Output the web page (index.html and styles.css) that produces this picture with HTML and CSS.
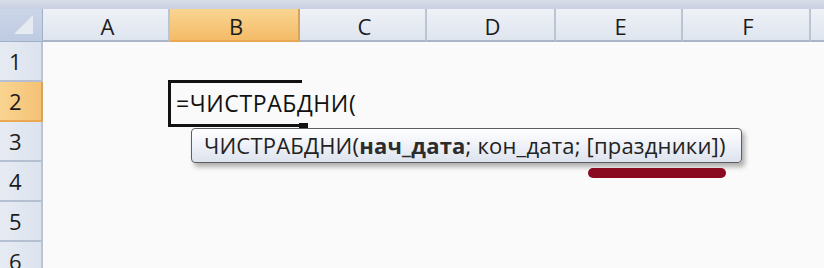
FILE: index.html
```html
<!DOCTYPE html>
<html lang="ru">
<head>
<meta charset="utf-8">
<link rel="stylesheet" href="styles.css">
</head>
<body>
<div class="sheet">
  <div class="topband"></div>
  <div class="grid">
    <div class="corner"><span class="tri"></span></div>
    <div class="ch">A</div>
    <div class="ch sel">B</div>
    <div class="ch">C</div>
    <div class="ch">D</div>
    <div class="ch">E</div>
    <div class="ch">F</div>
    <div class="ch last"></div>

    <div class="rh">1</div><div class="row"></div>
    <div class="rh sel">2</div><div class="row"></div>
    <div class="rh">3</div><div class="row"></div>
    <div class="rh">4</div><div class="row"></div>
    <div class="rh">5</div><div class="row"></div>
    <div class="rh">6</div><div class="row"></div>
  </div>

  <div class="editor"><span class="handle"></span></div>
  <div class="formula">=ЧИСТРАБДНИ(</div>
  <div class="tip">ЧИСТРАБДНИ(<b>нач_дата</b>; кон_дата; [праздники])</div>
  <div class="mark"></div>
</div>
</body>
</html>
```

FILE: styles.css
```css
html, body {
  margin: 0;
  padding: 0;
  background: #fafafa;
}
.sheet {
  position: relative;
  width: 824px;
  height: 268px;
  overflow: hidden;
  font-family: "Open Sans", "Noto Sans", sans-serif;
  color: #1c1c1c;
}
.topband {
  height: 9px;
  background: linear-gradient(#d9dde8, #c9d0e2);
}
.grid {
  display: grid;
  grid-template-columns: 43px 127px 130px 127px 129px 127px 128px 1fr;
  grid-template-rows: 33px repeat(6, 40px);
}
.corner {
  background: linear-gradient(#cbd5e8, #bfcbe2);
  border-right: 1px solid #9fb0c8;
  border-bottom: 1px solid #9fb0c8;
  position: relative;
}
.tri {
  position: absolute;
  left: 14px;
  top: 6px;
  width: 0;
  height: 0;
  border-left: 19px solid transparent;
  border-bottom: 19px solid #e6eaf1;
}
.ch {
  background: linear-gradient(#eef1f6, #dfe5ef);
  border-right: 2px solid #b9c4d4;
  border-bottom: 2px solid #a9b6c9;
  display: flex;
  align-items: center;
  justify-content: center;
  font-size: 22px;
  line-height: 1;
  padding-top: 2px;
  padding-left: 4px;
  box-sizing: border-box;
}
.ch.sel {
  background: linear-gradient(#f9d592, #f4bb68);
  border-right-color: #d7a35e;
  border-bottom-color: #e9a851;
}
.ch.last {
  border-right: none;
}
.rh {
  grid-column: 1;
  background: linear-gradient(90deg, #e6ebf3, #dce3ee);
  border-right: 2px solid #b9c4d4;
  border-bottom: 2px solid #b4c0d1;
  box-sizing: border-box;
  display: flex;
  align-items: center;
  padding-left: 9px;
  font-size: 22px;
  line-height: 1;
}
.rh.sel {
  background: linear-gradient(90deg, #f9d490, #f5c275);
  border-bottom-color: #e9a851;
  border-right-color: #d7a35e;
}
.row {
  grid-column: 2 / -1;
  background: #fafafa;
}
.editor {
  position: absolute;
  left: 168px;
  top: 80px;
  width: 131px;
  height: 41px;
  border-top: 3px solid #111;
  border-left: 3px solid #111;
  border-bottom: 3px solid #111;
}
.handle {
  position: absolute;
  right: -6px;
  bottom: -6px;
  width: 9px;
  height: 7px;
  background: #111;
}
.formula {
  position: absolute;
  left: 176px;
  top: 88px;
  font-size: 23px;
  letter-spacing: 0.6px;
  line-height: 30px;
  white-space: nowrap;
  color: #111;
}
.tip {
  position: absolute;
  left: 191px;
  top: 128px;
  width: 551px;
  height: 35px;
  box-sizing: border-box;
  border: 1px solid #5e5e5e;
  border-radius: 4px;
  background: linear-gradient(#ffffff, #dde3ee);
  box-shadow: 3px 4px 5px rgba(0, 0, 0, 0.3);
  padding-left: 12px;
  font-size: 22px;
  letter-spacing: 0.2px;
  line-height: 32px;
  white-space: nowrap;
  color: #222;
}
.tip b {
  font-weight: 700;
  color: #2c2c2c;
}
.mark {
  position: absolute;
  left: 588px;
  top: 168px;
  width: 138px;
  height: 10px;
  border-radius: 5px;
  background: #8a0a1f;
}
```
